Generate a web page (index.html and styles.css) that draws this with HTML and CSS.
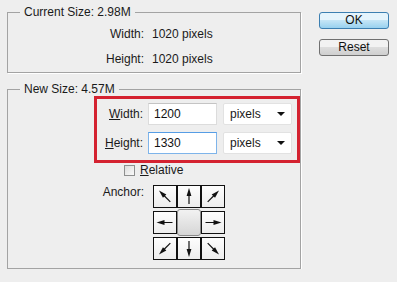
FILE: index.html
```html
<!DOCTYPE html>
<html lang="en">
<head>
  <meta charset="UTF-8">
  <title>Image Size</title>
  <link rel="stylesheet" href="styles.css">
</head>
<body>
  <div class="dialog">
    <div class="main">
      <fieldset class="group current">
        <legend>Current Size: 2.98M</legend>
        <div class="info-row"><span class="info-label">Width:</span><span>1020 pixels</span></div>
        <div class="info-row"><span class="info-label">Height:</span><span>1020 pixels</span></div>
      </fieldset>

      <fieldset class="group new-size">
        <legend>New Size: 4.57M</legend>
        <div class="highlight">
          <div class="dim-row">
            <label class="dim-label" for="width"><u>W</u>idth:</label>
            <input class="dim-input" type="text" id="width" value="1200">
            <div class="unit">pixels<span class="caret"></span></div>
          </div>
          <div class="dim-row">
            <label class="dim-label" for="height"><u>H</u>eight:</label>
            <input class="dim-input focused" type="text" id="height" value="1330">
            <div class="unit">pixels<span class="caret"></span></div>
          </div>
        </div>

        <div class="relative-row">
          <span class="check"></span><span><u>R</u>elative</span>
        </div>

        <div class="anchor-row">
          <span class="anchor-label">Anchor:</span>
          <div class="anchor-grid">
            <div class="cell"><svg class="arrow a-nw" viewBox="0 0 22 21"><line x1="11" y1="18" x2="11" y2="8"/><polygon points="11,2 8.6,10 13.4,10"/></svg></div>
            <div class="cell"><svg class="arrow a-n" viewBox="0 0 22 21"><line x1="11" y1="18" x2="11" y2="8"/><polygon points="11,2 8.6,10 13.4,10"/></svg></div>
            <div class="cell"><svg class="arrow a-ne" viewBox="0 0 22 21"><line x1="11" y1="18" x2="11" y2="8"/><polygon points="11,2 8.6,10 13.4,10"/></svg></div>
            <div class="cell"><svg class="arrow a-w" viewBox="0 0 22 21"><line x1="11" y1="18" x2="11" y2="8"/><polygon points="11,2 8.6,10 13.4,10"/></svg></div>
            <div class="cell center"></div>
            <div class="cell"><svg class="arrow a-e" viewBox="0 0 22 21"><line x1="11" y1="18" x2="11" y2="8"/><polygon points="11,2 8.6,10 13.4,10"/></svg></div>
            <div class="cell"><svg class="arrow a-sw" viewBox="0 0 22 21"><line x1="11" y1="18" x2="11" y2="8"/><polygon points="11,2 8.6,10 13.4,10"/></svg></div>
            <div class="cell"><svg class="arrow a-s" viewBox="0 0 22 21"><line x1="11" y1="18" x2="11" y2="8"/><polygon points="11,2 8.6,10 13.4,10"/></svg></div>
            <div class="cell"><svg class="arrow a-se" viewBox="0 0 22 21"><line x1="11" y1="18" x2="11" y2="8"/><polygon points="11,2 8.6,10 13.4,10"/></svg></div>
          </div>
        </div>
      </fieldset>
    </div>

    <div class="buttons">
      <button class="btn default">OK</button>
      <button class="btn">Reset</button>
    </div>
  </div>
</body>
</html>
```

FILE: styles.css
```css
body {
  margin: 0;
  background: #eeeeee;
  font-family: "Liberation Sans", Arial, sans-serif;
  font-size: 12px;
  color: #1a1a1a;
}
.dialog {
  display: flex;
  padding: 5px 0 0 7px;
}
.main {
  width: 294px;
}
.group {
  margin: 0;
  padding: 0;
  border: 1px solid #a3a3a3;
  box-shadow: 1px 1px 0 #ffffff;
}
.group legend {
  margin-left: 12px;
  padding: 0 4px;
  line-height: 14px;
}
.current {
  padding-top: 2px;
  padding-bottom: 1px;
}
.info-row {
  display: flex;
  height: 25px;
  align-items: center;
  gap: 8px;
}
.info-label {
  width: 136px;
  text-align: right;
}
.new-size {
  margin-top: 9px;
  padding-bottom: 8px;
}
.highlight {
  margin-left: 86px;
  border: 3px solid #d42230;
  padding: 4px 0 6px;
  display: flex;
  flex-direction: column;
  gap: 7px;
}
.dim-row {
  display: flex;
  align-items: center;
}
.dim-label {
  width: 46px;
  text-align: right;
  margin-right: 5px;
}
.dim-input {
  box-sizing: border-box;
  width: 69px;
  height: 22px;
  margin: 0 6px 0 0;
  padding: 0 5px;
  border: 1px solid #dcdcdc;
  border-top-color: #c4c4c4;
  background: #ffffff;
  font: inherit;
  color: #111;
}
.dim-input.focused {
  border-color: #7eb4ea;
  border-top-color: #569de5;
}
.unit {
  box-sizing: border-box;
  width: 69px;
  height: 22px;
  padding-left: 6px;
  display: flex;
  align-items: center;
  justify-content: space-between;
  background: #ffffff;
  border: 1px solid #e2e2e2;
  border-radius: 2px;
}
.caret {
  width: 0;
  height: 0;
  margin-right: 6px;
  border-left: 4px solid transparent;
  border-right: 4px solid transparent;
  border-top: 4px solid #111;
}
.relative-row {
  display: flex;
  align-items: center;
  height: 14px;
  margin-left: 116px;
  gap: 5px;
}
.check {
  box-sizing: border-box;
  width: 11px;
  height: 11px;
  border: 1px solid #8e8f8f;
  background: linear-gradient(135deg, #dcdcdc, #fafafa);
}
.anchor-row {
  display: flex;
  margin-top: 8px;
  gap: 9px;
}
.anchor-label {
  width: 136px;
  text-align: right;
  line-height: 14px;
}
.anchor-grid {
  display: grid;
  grid-template-columns: repeat(3, 24px);
  grid-template-rows: repeat(3, 23px);
  row-gap: 3px;
}
.cell {
  box-sizing: border-box;
  border: 1px solid #111;
  background: linear-gradient(#fdfdfd, #ededed);
  display: flex;
  align-items: center;
  justify-content: center;
}
.cell.center {
  margin: -2px 0;
  border: 1px solid #8a8a8a;
  border-radius: 3px;
  background: linear-gradient(#f2f2f2, #d6d6d6);
}
.arrow {
  width: 22px;
  height: 21px;
}
.arrow line {
  stroke: #111;
  stroke-width: 1.2;
}
.arrow polygon {
  fill: #111;
}
.a-ne { transform: rotate(45deg); }
.a-e { transform: rotate(90deg); }
.a-se { transform: rotate(135deg); }
.a-s { transform: rotate(180deg); }
.a-sw { transform: rotate(225deg); }
.a-w { transform: rotate(270deg); }
.a-nw { transform: rotate(315deg); }
.buttons {
  display: flex;
  flex-direction: column;
  gap: 10px;
  margin: 7px 0 0 18px;
}
.btn {
  width: 70px;
  height: 17px;
  padding: 0;
  border: 1px solid #707070;
  border-radius: 3px;
  background: linear-gradient(#f2f2f2 50%, #dddddd 50%, #cfcfcf);
  font: inherit;
  color: #111;
  line-height: 15px;
}
.btn.default {
  border-color: #3c7fb1;
  background: linear-gradient(#e5f4fc 50%, #c4e5f6 50%, #98d1ef);
}
```
